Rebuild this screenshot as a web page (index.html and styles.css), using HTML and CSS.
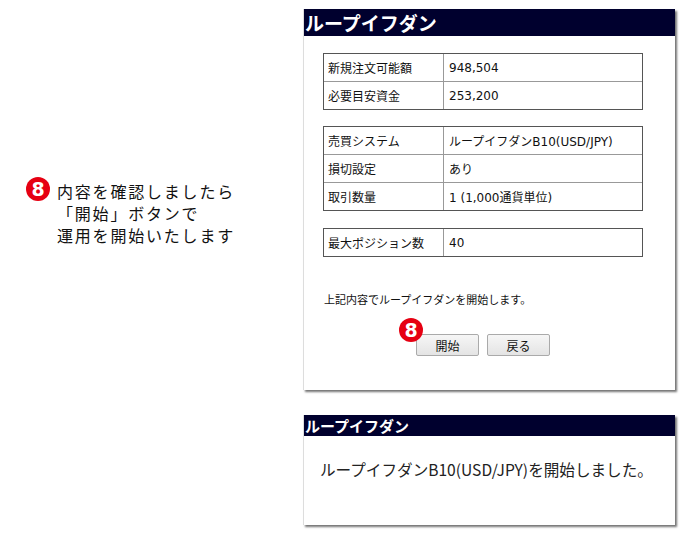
FILE: index.html
```html
<!DOCTYPE html>
<html lang="ja">
<head>
<meta charset="utf-8">
<link rel="stylesheet" href="styles.css">
</head>
<body>
<div class="page">
  <div class="note">
    <span class="badge badge-lg">8</span>
    <p class="note-text">内容を確認しましたら<br>「開始」ボタンで<br>運用を開始いたします</p>
  </div>
  <div class="panels">
    <section class="panel panel-confirm">
      <h1 class="panel-title">ループイフダン</h1>
      <div class="panel-body">
        <div class="kv kv-first">
          <div class="k">新規注文可能額</div><div class="v">948,504</div>
          <div class="k last">必要目安資金</div><div class="v last">253,200</div>
        </div>
        <div class="kv">
          <div class="k">売買システム</div><div class="v">ループイフダンB10(USD/JPY)</div>
          <div class="k">損切設定</div><div class="v">あり</div>
          <div class="k last">取引数量</div><div class="v last">1 (1,000通貨単位)</div>
        </div>
        <div class="kv">
          <div class="k last">最大ポジション数</div><div class="v last">40</div>
        </div>
        <p class="message">上記内容でループイフダンを開始します。</p>
        <div class="buttons">
          <button class="btn btn-start"><span class="badge badge-sm">8</span>開始</button>
          <button class="btn">戻る</button>
        </div>
      </div>
    </section>
    <section class="panel panel-done">
      <h2 class="panel-title small">ループイフダン</h2>
      <p class="done-text">ループイフダンB10(USD/JPY)を開始しました。</p>
    </section>
  </div>
</div>
</body>
</html>
```
FILE: styles.css
```css
html, body {
  margin: 0;
  padding: 0;
  background: #fff;
}
body {
  width: 700px;
  height: 535px;
  overflow: hidden;
  font-family: "DejaVu Sans", "Noto Sans CJK JP", sans-serif;
  color: #111;
}
.page {
  display: flex;
  height: 535px;
}
.note {
  width: 303px;
  box-sizing: border-box;
  padding: 177px 0 0 26px;
  display: flex;
  align-items: flex-start;
}
.badge {
  display: inline-flex;
  align-items: center;
  justify-content: center;
  background: #e60012;
  color: #fff;
  border-radius: 50%;
  font-family: "DejaVu Sans", sans-serif;
  font-weight: 900;
  line-height: 1;
}
.badge-lg {
  width: 24px;
  height: 24px;
  font-size: 19px;
  flex: none;
}
.note-text {
  margin: 3px 0 0 7px;
  font-family: "Noto Sans CJK JP", sans-serif;
  font-size: 16px;
  line-height: 22px;
  letter-spacing: 1.8px;
  color: #111;
}
.panels {
  width: 373px;
  padding-top: 9px;
  display: flex;
  flex-direction: column;
  gap: 25px;
}
.panel {
  background: #fff;
  border-left: 1px solid #ddd;
  box-shadow: 2px 2px 2px rgba(0,0,0,0.55);
  width: 371px;
}
.panel-title {
  margin: 0;
  background: #00002e;
  color: #fff;
  font-family: "Noto Sans CJK JP", sans-serif;
  font-weight: 700;
  font-size: 19px;
  height: 27px;
  line-height: 27px;
  padding-left: 1px;
}
.panel-title.small {
  font-size: 15px;
  height: 21px;
  line-height: 21px;
}
.panel-confirm {
  height: 381px;
}
.panel-body {
  padding: 17px 0 0 19px;
  width: 320px;
}
.kv {
  display: grid;
  grid-template-columns: 119px 1fr;
  border: 1px solid #555;
  margin-bottom: 17px;
  font-size: 12px;
}
.kv-first {
  margin-bottom: 16px;
}
.k, .v {
  height: 27px;
  display: flex;
  align-items: center;
  border-bottom: 1px solid #999;
  white-space: nowrap;
}
.k {
  padding-left: 4px;
  font-family: "Noto Sans CJK JP", sans-serif;
}
.v {
  padding-left: 5px;
  border-left: 1px solid #999;
}
.k.last, .v.last {
  border-bottom: none;
}
.message {
  margin: 34px 0 0 1px;
  font-family: "Noto Sans CJK JP", sans-serif;
  font-size: 11px;
  line-height: 16px;
}
.buttons {
  display: flex;
  justify-content: center;
  gap: 8px;
  margin-top: 27px;
}
.btn {
  position: relative;
  width: 63px;
  height: 22px;
  padding: 0;
  border: 1px solid #aaa;
  border-radius: 2px;
  background: linear-gradient(#f6f6f6, #e4e4e4);
  font-family: "Noto Sans CJK JP", sans-serif;
  font-size: 12px;
  color: #111;
}
.badge-sm {
  position: absolute;
  left: -18px;
  top: -17px;
  width: 24px;
  height: 24px;
  font-size: 19px;
}
.panel-done {
  height: 110px;
}
.done-text {
  margin: 23px 0 0 16px;
  font-family: "Noto Sans CJK JP", sans-serif;
  font-size: 15.6px;
  line-height: 20px;
  color: #222;
}
```
